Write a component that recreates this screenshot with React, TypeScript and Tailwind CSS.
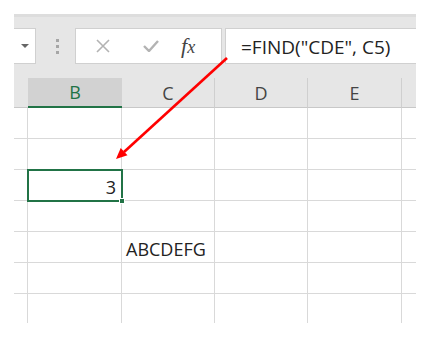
const cols = ['', 'B', 'C', 'D', 'E', '']
const widths = ['w-[14px]', 'w-[94px]', 'w-[93px]', 'w-[93px]', 'w-[94px]', 'w-[14px]']
const rowCount = 7

function Cell({ row, col }: { row: number; col: number }) {
  const last = row === rowCount - 1
  const base = `${widths[col]} shrink-0 flex items-end pb-[1px] text-[18px] leading-6 text-[#222] ${last ? 'h-[29px]' : 'h-[31px] border-b border-[#d9d9d9]'} ${col < 5 ? 'border-r border-[#d9d9d9]' : ''}`
  if (row === 2 && col === 1) {
    return (
      <div className={`${base} relative justify-end`}>
        <div className="absolute -left-px -top-px w-[96px] h-[33px] border-2 border-[#217346]" />
        <div className="absolute -right-[4px] -bottom-[4px] w-[6px] h-[6px] bg-[#217346] border border-white" />
        <span className="pr-[5px]">3</span>
      </div>
    )
  }
  if (row === 4 && col === 2) {
    return (
      <div className={`${base} overflow-visible`}>
        <span className="pl-[4px] whitespace-nowrap">ABCDEFG</span>
      </div>
    )
  }
  return <div className={base} />
}

export default function App() {
  return (
    <div className="relative w-[433px] h-[339px] bg-white pt-[14px] pl-[14px] font-['Open_Sans',_'Noto_Sans',_sans-serif] overflow-hidden">
      <div className="w-[402px]">
        {/* toolbar */}
        <div className="h-[64px] bg-[#e6e6e6] border-t-[3px] border-[#dddddd] pt-[11px] flex items-start">
          <div className="w-[22px] h-[36px] bg-white border border-l-0 border-[#d0d0d0] flex items-center justify-center">
            <div className="w-0 h-0 border-l-[4px] border-r-[4px] border-t-[4px] border-l-transparent border-r-transparent border-t-[#666]" />
          </div>
          <div className="ml-[20px] h-[36px] flex flex-col justify-center gap-[3px]">
            <div className="w-[3px] h-[3px] bg-[#a6a6a6]" />
            <div className="w-[3px] h-[3px] bg-[#a6a6a6]" />
            <div className="w-[3px] h-[3px] bg-[#a6a6a6]" />
          </div>
          <div className="ml-[16px] w-[147px] h-[36px] bg-white border border-[#d0d0d0] flex items-center">
            <svg width="14" height="14" viewBox="0 0 14 14" className="ml-[20px]">
              <path d="M1 1 L13 13 M13 1 L1 13" stroke="#b3b3b3" strokeWidth="1.6" fill="none" />
            </svg>
            <svg width="16" height="12" viewBox="0 0 16 12" className="ml-[33px]">
              <path d="M1 6 L6 11 L15 1" stroke="#b3b3b3" strokeWidth="2.4" fill="none" />
            </svg>
            <span className="ml-[22px] text-[22px] italic text-[#444] font-['Liberation_Serif',_serif] leading-none">
              f<span className="text-[18px]">x</span>
            </span>
          </div>
          <div className="ml-[3px] flex-1 h-[36px] bg-white border border-r-0 border-[#d0d0d0] flex items-center pl-[15px] pt-[1px]">
            <span className="text-[19px] text-[#222] leading-6 whitespace-nowrap">=FIND("CDE", C5)</span>
          </div>
        </div>

        {/* column headers */}
        <div className="flex bg-[#e6e6e6]">
          {cols.map((c, i) => (
            <div
              key={i}
              className={`${widths[i]} shrink-0 h-[30px] flex items-center justify-center text-[18px] leading-6 ${
                c === 'B'
                  ? 'bg-[#d2d2d2] border-b-2 border-[#217346] text-[#217346]'
                  : 'border-b border-[#c8c8c8] text-[#444]'
              } ${i >= 2 && i < 5 ? 'border-r border-r-[#cfcfcf]' : ''}`}
            >
              {c}
            </div>
          ))}
        </div>

        {/* grid */}
        {Array.from({ length: rowCount }).map((_, r) => (
          <div key={r} className="flex">
            {cols.map((_, c) => (
              <Cell key={c} row={r} col={c} />
            ))}
          </div>
        ))}
      </div>

      {/* red arrow */}
      <svg className="absolute inset-0 pointer-events-none" width="433" height="339">
        <line x1="227" y1="58" x2="124" y2="152" stroke="#ff0000" strokeWidth="2.6" />
        <polygon points="116,159 127.5,155.3 120.7,147.9" fill="#ff0000" />
      </svg>
    </div>
  )
}
